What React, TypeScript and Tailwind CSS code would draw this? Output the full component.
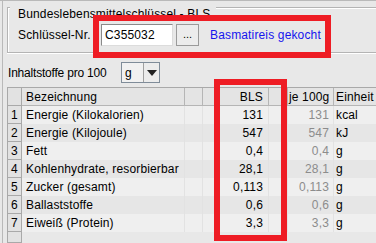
type Row = { name: string; bls: string; unit: string };

const rows: Row[] = [
  { name: "Energie (Kilokalorien)", bls: "131", unit: "kcal" },
  { name: "Energie (Kilojoule)", bls: "547", unit: "kJ" },
  { name: "Fett", bls: "0,4", unit: "g" },
  { name: "Kohlenhydrate, resorbierbar", bls: "28,1", unit: "g" },
  { name: "Zucker (gesamt)", bls: "0,113", unit: "g" },
  { name: "Ballaststoffe", bls: "0,6", unit: "g" },
  { name: "Eiweiß (Protein)", bls: "3,3", unit: "g" },
];

const NumCell = ({ children }: { children?: React.ReactNode }) => (
  <div className="w-[14px] shrink-0 h-full flex items-center justify-center bg-[#e2e2e2] border-r border-b border-[#a9a9a9]">
    {children}
  </div>
);

export default function App() {
  return (
    <div className="relative w-[376px] h-[243px] overflow-hidden bg-[#e8e8e8] border-t border-[#b9b9b9] font-['Liberation_Sans',Arial,sans-serif] text-[12px] leading-[14px] tracking-[0.15px] text-black">
      <div className="ml-[2px] h-full flex flex-col border-l border-[#b9b9b9]">
        {/* BLS group */}
        <div className="ml-[4px] mt-[6px] flex flex-col pb-[6px] border-l border-b border-[#b4b4b4] shadow-[inset_1px_0_0_#fff,0_1px_0_#fff]">
          <div className="flex items-start h-[14px]">
            <div className="w-[2px] h-[2px] border-t border-b border-t-[#b4b4b4] border-b-white" />
            <span className="pl-[8px] pr-[6px] whitespace-nowrap">Bundeslebensmittelschlüssel - BLS</span>
            <div className="flex-1 h-[2px] border-t border-b border-t-[#b4b4b4] border-b-white" />
          </div>
          <div className="mt-[3px] flex items-center h-[22px]">
            <span className="pl-[10px] w-[93px] whitespace-nowrap">Schlüssel-Nr.</span>
            <div className="w-[72px] h-[22px] flex items-center pl-[3px] bg-white border border-[#8a8a8a] border-r-[#dcdcdc] border-b-[#dcdcdc]">
              C355032
            </div>
            <button className="ml-[3px] w-[23px] h-[22px] flex items-center justify-center pb-[2px] bg-[#ececec] border border-[#9a9a9a] text-[11px] tracking-normal">
              ...
            </button>
            <span className="ml-[11px] text-[#1515ee] whitespace-nowrap">Basmatireis gekocht</span>
          </div>
        </div>

        {/* unit selector */}
        <div className="mt-[9px] ml-[5px] flex items-center h-[21px]">
          <span className="w-[113px] whitespace-nowrap tracking-[-0.2px]">Inhaltstoffe pro 100</span>
          <div className="flex h-[21px] w-[39px] border border-[#7f8c99]">
            <div className="w-[21px] flex items-center pl-[3px] bg-[#f1f1f1]">
              <span className="underline">g</span>
            </div>
            <div className="flex-1 flex items-center justify-center bg-[#ececec] border-l border-[#a0a0a0]">
              <svg width="10" height="6" viewBox="0 0 10 6">
                <path d="M0 0h10L5 6z" fill="#222" />
              </svg>
            </div>
          </div>
        </div>

        {/* table */}
        <div className="mt-[4px] ml-[4px] flex-1 flex flex-col border-l border-t border-[#a9a9a9]">
          <div className="flex h-[18px] bg-[#e4e4e4]">
            <NumCell />
            <div className="w-[163px] shrink-0 flex items-center pl-[4px] border-r border-b border-[#b5b5b5]">Bezeichnung</div>
            <div className="w-[18px] shrink-0 border-r border-b border-[#b5b5b5]" />
            <div className="w-[66px] shrink-0 flex items-center justify-end pr-[5px] border-r border-b border-[#b5b5b5]">BLS</div>
            <div className="w-[19px] shrink-0 border-r border-b border-[#b5b5b5]" />
            <div className="w-[46px] shrink-0 flex items-center pl-[1px] whitespace-nowrap overflow-hidden border-r border-b border-[#b5b5b5]">je 100g</div>
            <div className="flex-1 flex items-center pl-[2px] border-b border-[#b5b5b5]">Einheit</div>
          </div>
          {rows.map((r, i) => (
            <div key={r.name} className={`flex h-[18px] ${i % 2 === 0 ? "bg-[#efefef]" : "bg-[#e6e6e6]"}`}>
              <NumCell>{i + 1}</NumCell>
              <div className="w-[163px] shrink-0 flex items-center pl-[4px] whitespace-nowrap overflow-hidden border-r border-[#e2e2e2]">{r.name}</div>
              <div className="w-[18px] shrink-0 border-r border-[#e2e2e2]" />
              <div className="w-[66px] shrink-0 flex items-center justify-end pr-[5px] border-r border-[#e2e2e2]">{r.bls}</div>
              <div className="w-[19px] shrink-0 border-r border-[#e2e2e2]" />
              <div className="w-[46px] shrink-0 flex items-center justify-end pr-[4px] text-[#8c8c8c] border-r border-[#e2e2e2]">{r.bls}</div>
              <div className="flex-1 flex items-center pl-[2px]">{r.unit}</div>
            </div>
          ))}
          <div className="flex flex-1">
            <NumCell />
          </div>
        </div>
      </div>

      {/* annotation boxes */}
      <div className="absolute left-[93px] top-[14px] w-[238px] h-[43px] border-[6px] border-[#ee1c24]" />
      <div className="absolute left-[214px] top-[78px] w-[73px] h-[162px] border-[6px] border-[#ee1c24]" />
    </div>
  );
}
